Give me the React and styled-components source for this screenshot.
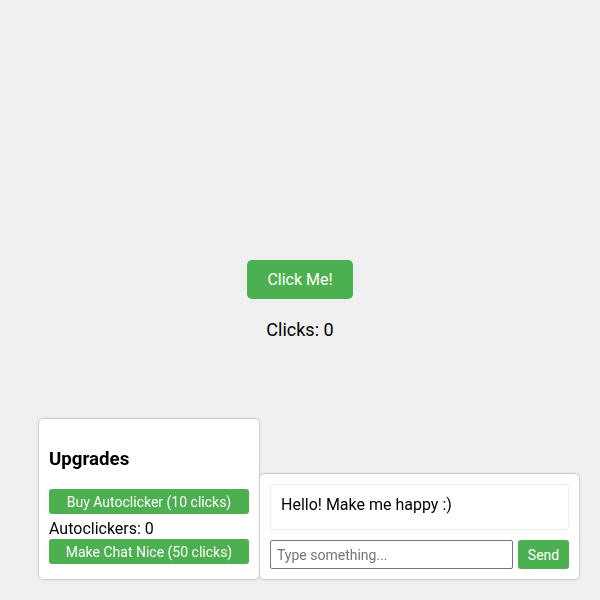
import React, { useState } from "react";
import styled, { createGlobalStyle } from "styled-components";

const green = "#4caf50";

const Global = createGlobalStyle`
  html, body {
    margin: 0;
    padding: 0;
    background: #f0f0f0;
    font-family: Roboto, "Liberation Sans", sans-serif;
    color: #000;
  }
  * { box-sizing: border-box; }
`;

const Main = styled.main`
  height: 100vh;
  display: flex;
  flex-direction: column;
  align-items: center;
  justify-content: center;
`;

const BigButton = styled.button`
  font-family: inherit;
  font-size: 16px;
  padding: 10px 20px;
  background: ${green};
  color: #fff;
  border: none;
  border-radius: 5px;
  cursor: pointer;
`;

const Counter = styled.p`
  font-size: 18px;
  margin: 20px 0 0;
`;

// widgets docked over the page, bottom right
const Dock = styled.div`
  position: fixed;
  right: 20px;
  bottom: 20px;
  display: flex;
  align-items: flex-end;
`;

const Panel = styled.section`
  background: #fff;
  border: 1px solid #ccc;
  border-radius: 5px;
  padding: 10px;
  width: ${(p) => p.$width}px;
  margin-left: ${(p) => p.$overlap || 0}px;
  box-shadow: 0 0 4px rgba(0, 0, 0, 0.06);
`;

const Title = styled.h3`
  font-size: 18.72px;
  margin: 19px 0;
`;

const SmallButton = styled.button`
  display: block;
  font-family: inherit;
  font-size: 14px;
  height: 25px;
  padding: 0 10px;
  width: ${(p) => (p.$width ? `${p.$width}px` : "auto")};
  background: ${green};
  color: #fff;
  border: none;
  border-radius: 3px;
  margin-bottom: ${(p) => (p.$gap ? 5 : 0)}px;
  cursor: pointer;
`;

const Stat = styled.div`
  font-size: 16px;
  line-height: 20px;
`;

const Message = styled.div`
  border: 1px solid #eee;
  border-radius: 3px;
  padding: 10px 10px 15px;
  font-size: 16px;
  margin-bottom: 10px;
`;

const InputRow = styled.div`
  display: flex;
  gap: 5px;
`;

const Input = styled.input`
  flex: 1;
  min-width: 0;
  height: 29px;
  font-family: inherit;
  font-size: 14px;
  padding: 4px 6px;
  border: 1px solid #767676;
  border-radius: 2px;
  &::placeholder { color: #757575; }
`;

const SendButton = styled(SmallButton)`
  height: 29px;
  width: 51px;
  padding: 0;
`;

export default function App() {
  const [clicks, setClicks] = useState(0);
  return (
    <>
      <Global />
      <Main>
        <BigButton onClick={() => setClicks(clicks + 1)}>Click Me!</BigButton>
        <Counter>Clicks: {clicks}</Counter>
      </Main>
      <Dock>
        <Panel $width={222}>
          <Title>Upgrades</Title>
          <SmallButton $width={200} $gap>Buy Autoclicker (10 clicks)</SmallButton>
          <Stat>Autoclickers: 0</Stat>
          <SmallButton $width={200} $gap>Make Chat Nice (50 clicks)</SmallButton>
        </Panel>
        <Panel $width={321} $overlap={-1}>
          <Message>Hello! Make me happy :)</Message>
          <InputRow>
            <Input placeholder="Type something..." />
            <SendButton>Send</SendButton>
          </InputRow>
        </Panel>
      </Dock>
    </>
  );
}
